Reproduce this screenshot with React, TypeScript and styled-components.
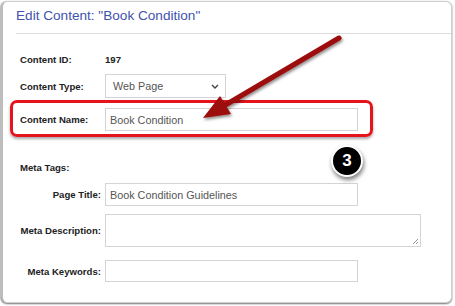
import React from "react";
import styled, { createGlobalStyle } from "styled-components";

const Global = createGlobalStyle`
  html, body { margin: 0; padding: 0; background: #ffffff; }
  body { font-family: "Liberation Sans", Arial, sans-serif; }
  * { box-sizing: border-box; }
`;

const Page = styled.div`
  position: relative;
  width: 455px;
  height: 306px;
  padding: 1px 3px 3px 1px;
  overflow: hidden;
`;

const Panel = styled.div`
  width: 451px;
  height: 302px;
  background: #fff;
  border: 1px solid #cfcfcf;
  border-left: 2px solid #bdbdbd;
  border-radius: 6px;
  box-shadow: 0 1px 2px rgba(0, 0, 0, 0.55), -1px 0 1px rgba(0, 0, 0, 0.15);
  display: flex;
  flex-direction: column;
`;

const Header = styled.div`
  margin-left: 13px;
  padding: 6px 0 9px 0;
  border-bottom: 1px solid #dcdcdc;
`;

const Title = styled.h1`
  margin: 0;
  font-family: "Liberation Sans", Arial, sans-serif;
  font-weight: normal;
  font-size: 13.6px;
  line-height: 16px;
  color: #4153ad;
`;

const Form = styled.div`
  display: flex;
  flex-direction: column;
  padding-left: 14px;
`;

const Row = styled.div<{ $mt: number; $h: number }>`
  display: flex;
  align-items: center;
  margin-top: ${(p) => p.$mt}px;
  height: ${(p) => p.$h}px;
`;

const Label = styled.div<{ $right?: boolean }>`
  width: 84px;
  flex: none;
  padding-left: ${(p) => (p.$right ? 0 : 3)}px;
  margin-right: 4px;
  text-align: ${(p) => (p.$right ? "right" : "left")};
  font-size: 9.6px;
  font-weight: bold;
  color: #222;
  white-space: nowrap;
`;

const Value = styled.div`
  font-size: 9.6px;
  font-weight: bold;
  color: #222;
`;

const Input = styled.div<{ $w: number }>`
  width: ${(p) => p.$w}px;
  height: 100%;
  border: 1px solid #d4d4d4;
  background: #fff;
  display: flex;
  align-items: center;
  padding-left: 4px;
  font-size: 10.8px;
  color: #555;
`;

const Select = styled(Input)`
  padding-left: 7px;
  padding-right: 6px;
  justify-content: space-between;
`;

const TextArea = styled(Input)`
  position: relative;
`;

const Grip = styled.svg`
  position: absolute;
  right: 1px;
  bottom: 1px;
`;

const Highlight = styled.div`
  position: absolute;
  left: 10px;
  top: 100px;
  width: 363px;
  height: 37px;
  border: 3px solid #e5141c;
  border-radius: 7px;
  box-shadow: 0 2px 3px rgba(0, 0, 0, 0.35);
  pointer-events: none;
`;

const Badge = styled.div`
  position: absolute;
  left: 331px;
  top: 145px;
  width: 32px;
  height: 32px;
  border-radius: 50%;
  background: #000;
  border: 2px solid #fff;
  box-shadow: 1px 3px 4px rgba(0, 0, 0, 0.5);
  color: #fff;
  font-weight: bold;
  font-size: 17px;
  display: flex;
  align-items: center;
  justify-content: center;
`;

const Overlay = styled.svg`
  position: absolute;
  left: 0;
  top: 0;
  pointer-events: none;
`;

export default function App() {
  return (
    <>
      <Global />
      <Page>
        <Panel>
          <Header>
            <Title>Edit Content: "Book Condition"</Title>
          </Header>
          <Form>
            <Row $mt={14} $h={22}>
              <Label>Content ID:</Label>
              <Value>197</Value>
            </Row>
            <Row $mt={4} $h={24}>
              <Label>Content Type:</Label>
              <Select $w={121}>
                <span>Web Page</span>
                <svg width="8" height="5" viewBox="0 0 8 5">
                  <path d="M1 1 L4 4 L7 1" fill="none" stroke="#444" strokeWidth="1.4" />
                </svg>
              </Select>
            </Row>
            <Row $mt={10} $h={23}>
              <Label>Content Name:</Label>
              <Input $w={253}>Book Condition</Input>
            </Row>
            <Row $mt={25} $h={22}>
              <Label>Meta Tags:</Label>
            </Row>
            <Row $mt={5} $h={23}>
              <Label $right>Page Title:</Label>
              <Input $w={253}>Book Condition Guidelines</Input>
            </Row>
            <Row $mt={8} $h={33}>
              <Label $right>Meta Description:</Label>
              <TextArea $w={316}>
                <Grip width="7" height="7" viewBox="0 0 7 7">
                  <path d="M6 1 L1 6 M6 4 L4 6" stroke="#999" strokeWidth="1" />
                </Grip>
              </TextArea>
            </Row>
            <Row $mt={13} $h={22}>
              <Label $right>Meta Keywords:</Label>
              <Input $w={253} />
            </Row>
          </Form>
        </Panel>
        <Highlight />
        <Badge>3</Badge>
        <Overlay width="455" height="306" viewBox="0 0 455 306">
          <defs>
            <filter id="sh" x="-20%" y="-20%" width="140%" height="140%">
              <feDropShadow dx="1" dy="2" stdDeviation="1.5" floodColor="#000" floodOpacity="0.45" />
            </filter>
          </defs>
          <g filter="url(#sh)">
            <line x1="339" y1="38" x2="222" y2="107" stroke="#9c0a0a" strokeWidth="5" strokeLinecap="round" />
            <polygon points="203,118 220,96 231,114" fill="#9c0a0a" />
          </g>
        </Overlay>
      </Page>
    </>
  );
}
